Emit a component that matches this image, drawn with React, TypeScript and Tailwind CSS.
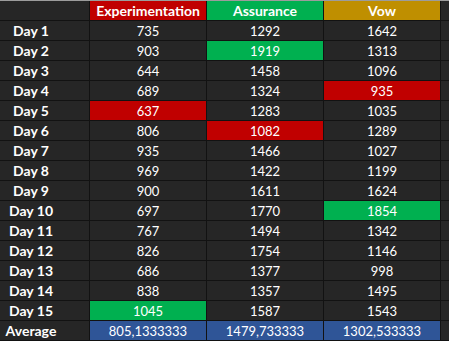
import React from "react";

type Hl = "r" | "g" | undefined;

const rows: { day: string; v: [number, Hl][] }[] = [
  { day: "Day 1", v: [[735, undefined], [1292, undefined], [1642, undefined]] },
  { day: "Day 2", v: [[903, undefined], [1919, "g"], [1313, undefined]] },
  { day: "Day 3", v: [[644, undefined], [1458, undefined], [1096, undefined]] },
  { day: "Day 4", v: [[689, undefined], [1324, undefined], [935, "r"]] },
  { day: "Day 5", v: [[637, "r"], [1283, undefined], [1035, undefined]] },
  { day: "Day 6", v: [[806, undefined], [1082, "r"], [1289, undefined]] },
  { day: "Day 7", v: [[935, undefined], [1466, undefined], [1027, undefined]] },
  { day: "Day 8", v: [[969, undefined], [1422, undefined], [1199, undefined]] },
  { day: "Day 9", v: [[900, undefined], [1611, undefined], [1624, undefined]] },
  { day: "Day 10", v: [[697, undefined], [1770, undefined], [1854, "g"]] },
  { day: "Day 11", v: [[767, undefined], [1494, undefined], [1342, undefined]] },
  { day: "Day 12", v: [[826, undefined], [1754, undefined], [1146, undefined]] },
  { day: "Day 13", v: [[686, undefined], [1377, undefined], [998, undefined]] },
  { day: "Day 14", v: [[838, undefined], [1357, undefined], [1495, undefined]] },
  { day: "Day 15", v: [[1045, "g"], [1587, undefined], [1543, undefined]] },
];

const cell = "flex items-center justify-center text-white leading-none pt-px";

export default function App() {
  return (
    <div
      className="w-[449px] h-[341px] overflow-hidden bg-[#121212] border-t border-[#9c9c9c] pb-px"
      style={{ fontFamily: "Lato, 'Liberation Sans', sans-serif" }}
    >
      <div className="grid grid-cols-[89px_116px_116px_116px_8px] auto-rows-[19px] gap-px">
        <div className="bg-[#262626]" />
        <div className={`${cell} bg-[#c00000] font-bold text-[14px]`}>Experimentation</div>
        <div className={`${cell} bg-[#00b050] font-bold text-[14px]`}>Assurance</div>
        <div className={`${cell} bg-[#bf8f00] font-bold text-[14px]`}>Vow</div>
        <div className="bg-[#262626]" />
        {rows.map((r) => (
          <React.Fragment key={r.day}>
            <div className="bg-[#262626] flex items-center">
              <div className={`${cell} w-[62px] font-bold text-[14px]`}>{r.day}</div>
            </div>
            {r.v.map(([n, h], i) => (
              <div
                key={i}
                className={`${cell} text-[13px] ${
                  h === "r" ? "bg-[#c00000]" : h === "g" ? "bg-[#00b050]" : "bg-[#262626]"
                }`}
              >
                {n}
              </div>
            ))}
            <div className="bg-[#262626]" />
          </React.Fragment>
        ))}
        <div className="bg-[#262626] flex items-center">
          <div className={`${cell} w-[62px] font-bold text-[14px]`}>Average</div>
        </div>
        <div className={`${cell} bg-[#2f5597] text-[13px]`}>805,1333333</div>
        <div className={`${cell} bg-[#2f5597] text-[13px]`}>1479,733333</div>
        <div className={`${cell} bg-[#2f5597] text-[13px]`}>1302,533333</div>
        <div className="bg-[#262626]" />
      </div>
    </div>
  );
}
